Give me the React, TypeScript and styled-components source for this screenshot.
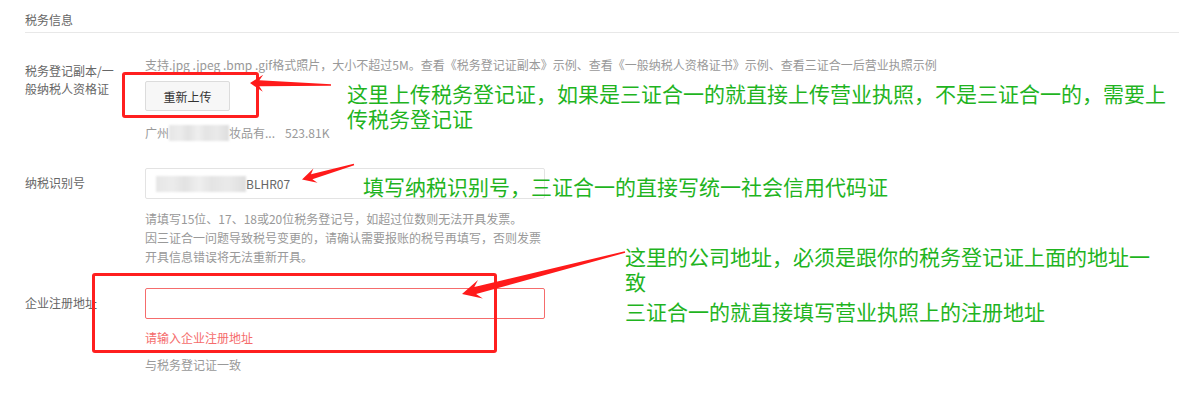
import styled, { createGlobalStyle } from "styled-components";

const GlobalStyle = createGlobalStyle`
  html, body {
    margin: 0;
    padding: 0;
    background: #fff;
  }
  body {
    font-family: "Noto Sans CJK SC", "Noto Sans", sans-serif;
    font-size: 12px;
    color: #666;
  }
`;

const Page = styled.div`
  position: relative;
  width: 1179px;
  height: 413px;
  overflow: hidden;
  padding-left: 25px;
  box-sizing: border-box;
`;

const SectionTitle = styled.div`
  padding: 12px 0 4px;
  line-height: 16px;
  color: #666;
  border-bottom: 1px solid #e8e8e8;
`;

const Row = styled.div<{ $gap: number }>`
  display: grid;
  grid-template-columns: 120px 400px;
  margin-top: ${(p) => p.$gap}px;
`;

const Label = styled.div<{ $inline?: boolean }>`
  color: #666;
  width: 92px;
  line-height: ${(p) => (p.$inline ? "30px" : "18px")};
  padding-top: ${(p) => (p.$inline ? "0" : "5px")};
  white-space: ${(p) => (p.$inline ? "nowrap" : "normal")};
`;

const Field = styled.div`
  display: flex;
  flex-direction: column;
  align-items: flex-start;
`;

const Hint = styled.div<{ $gap?: number; $lh?: number }>`
  color: #999;
  line-height: ${(p) => p.$lh ?? 16}px;
  margin-top: ${(p) => p.$gap ?? 0}px;
  white-space: nowrap;
`;

const ErrorText = styled(Hint)`
  color: #f56c6c;
`;

const UploadButton = styled.button`
  margin-top: 8px;
  width: 85px;
  height: 30px;
  border: 1px solid #dcdcdc;
  border-radius: 2px;
  background: #f7f7f7;
  color: #333;
  font-family: inherit;
  font-size: 12px;
  padding: 0;
`;

const FileLine = styled.div`
  margin-top: 14px;
  line-height: 16px;
  color: #999;
  display: flex;
  align-items: center;
  white-space: nowrap;
`;

const Blur = styled.span<{ $w: number }>`
  display: inline-block;
  width: ${(p) => p.$w}px;
  height: 16px;
  background: linear-gradient(
    90deg,
    #e6e6e6 0%,
    #ececec 18%,
    #e2e2e2 32%,
    #efefef 48%,
    #e4e4e4 62%,
    #eaeaea 80%,
    #dedede 100%
  );
  filter: blur(1px);
`;

const FileSize = styled.span`
  margin-left: 10px;
`;

const Input = styled.div<{ $error?: boolean }>`
  width: 400px;
  height: 31px;
  box-sizing: border-box;
  border: 1px solid ${(p) => (p.$error ? "#f56c6c" : "#e3e3e3")};
  border-radius: 2px;
  padding-left: 10px;
  display: flex;
  align-items: center;
  color: #666;
`;

/* ---------- annotations drawn over the form ---------- */

const Overlay = styled.svg`
  position: absolute;
  left: 0;
  top: 0;
  pointer-events: none;
`;

const RedBox = styled.div<{ $x: number; $y: number; $w: number; $h: number }>`
  position: absolute;
  left: ${(p) => p.$x}px;
  top: ${(p) => p.$y}px;
  width: ${(p) => p.$w}px;
  height: ${(p) => p.$h}px;
  box-sizing: border-box;
  border: 3px solid #ff1f1f;
  border-radius: 3px;
  pointer-events: none;
`;

const Note = styled.div<{ $x: number; $y: number; $w?: number }>`
  position: absolute;
  left: ${(p) => p.$x}px;
  top: ${(p) => p.$y}px;
  width: ${(p) => (p.$w ? `${p.$w}px` : "auto")};
  font-size: 21px;
  line-height: 25px;
  color: #1fb41f;
  white-space: nowrap;
`;

const NotePara = styled.div<{ $gap?: number }>`
  margin-top: ${(p) => p.$gap ?? 0}px;
`;

type Pt = [number, number];

function arrowPoints(tail: Pt, tip: Pt, len: number, head: number, neck: number, end: number) {
  const dx = tip[0] - tail[0];
  const dy = tip[1] - tail[1];
  const d = Math.hypot(dx, dy);
  const ux = dx / d;
  const uy = dy / d;
  const nx = -uy;
  const ny = ux;
  const at = (back: number, side: number): string =>
    `${(tip[0] - ux * back + nx * side).toFixed(1)},${(tip[1] - uy * back + ny * side).toFixed(1)}`;
  const neckBack = len * 0.72;
  return [
    `${(tail[0] + nx * end).toFixed(1)},${(tail[1] + ny * end).toFixed(1)}`,
    at(neckBack, neck),
    at(len, head),
    at(0, 0),
    at(len, -head),
    at(neckBack, -neck),
    `${(tail[0] - nx * end).toFixed(1)},${(tail[1] - ny * end).toFixed(1)}`,
  ].join(" ");
}

const arrows = [
  arrowPoints([331, 85], [250, 83], 13, 8.5, 3, 0.8),
  arrowPoints([354, 164.5], [302, 179.5], 14, 7.5, 2.6, 0.8),
  arrowPoints([625, 252], [462, 294], 19, 9.5, 3.6, 0.8),
];

export default function App() {
  return (
    <>
      <GlobalStyle />
      <Page>
        <SectionTitle>税务信息</SectionTitle>

        <Row $gap={24}>
          <Label>税务登记副本/一般纳税人资格证</Label>
          <Field>
            <Hint>
              支持.jpg .jpeg .bmp .gif格式照片，大小不超过5M。查看《税务登记证副本》示例、查看《一般纳税人资格证书》示例、查看三证合一后营业执照示例
            </Hint>
            <UploadButton>重新上传</UploadButton>
            <FileLine>
              广州
              <Blur $w={60} />
              妆品有...
              <FileSize>523.81K</FileSize>
            </FileLine>
          </Field>
        </Row>

        <Row $gap={27}>
          <Label $inline>纳税识别号</Label>
          <Field>
            <Input>
              <Blur $w={90} />
              BLHR07
            </Input>
            <Hint $gap={10} $lh={19}>
              请填写15位、17、18或20位税务登记号，如超过位数则无法开具发票。
              <br />
              因三证合一问题导致税号变更的，请确认需要报账的税号再填写，否则发票
              <br />
              开具信息错误将无法重新开具。
            </Hint>
          </Field>
        </Row>

        <Row $gap={22}>
          <Label $inline>企业注册地址</Label>
          <Field>
            <Input $error />
            <ErrorText $gap={11}>请输入企业注册地址</ErrorText>
            <Hint $gap={11}>与税务登记证一致</Hint>
          </Field>
        </Row>

        <RedBox $x={122} $y={72} $w={137} $h={46} />
        <RedBox $x={92} $y={273} $w={405} $h={80} />

        <Overlay width={1179} height={413} viewBox="0 0 1179 413">
          {arrows.map((pts, i) => (
            <polygon key={i} points={pts} fill="#ff1a1a" />
          ))}
        </Overlay>

        <Note $x={347} $y={81}>
          这里上传税务登记证，如果是三证合一的就直接上传营业执照，不是三证合一的，需要上
          <br />
          传税务登记证
        </Note>
        <Note $x={363} $y={174}>
          填写纳税识别号，三证合一的直接写统一社会信用代码证
        </Note>
        <Note $x={625} $y={244}>
          <NotePara>
            这里的公司地址，必须是跟你的税务登记证上面的地址一
            <br />致
          </NotePara>
          <NotePara $gap={5}>三证合一的就直接填写营业执照上的注册地址</NotePara>
        </Note>
      </Page>
    </>
  );
}
